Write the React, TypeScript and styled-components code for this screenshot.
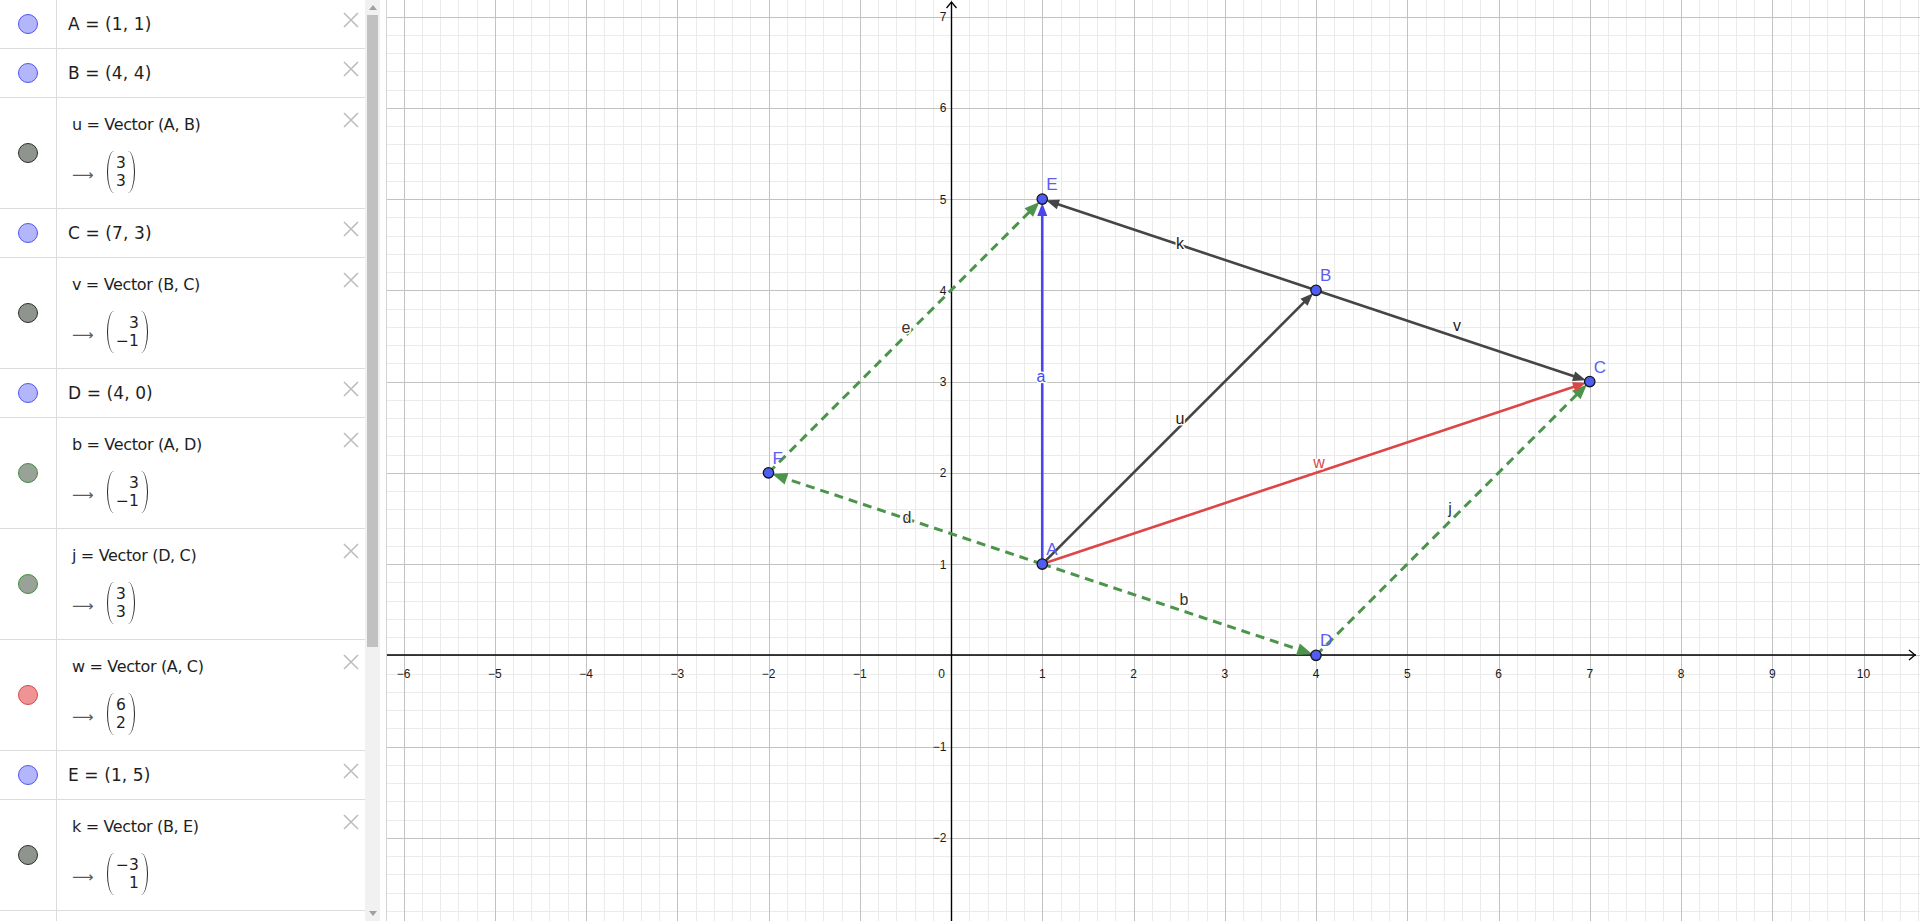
import styled, { createGlobalStyle } from "styled-components";

const GlobalStyle = createGlobalStyle`
  html, body {
    margin: 0;
    padding: 0;
    height: 100%;
    overflow: hidden;
    background: #fff;
  }
  #root {
    height: 100%;
  }
`;

type Tone = "blue" | "gray" | "green" | "red";

const tones: Record<Tone, { fill: string; stroke: string }> = {
  blue: { fill: "#b4b6fb", stroke: "#4d55f0" },
  gray: { fill: "#8e958e", stroke: "#2e2e2e" },
  green: { fill: "#98a298", stroke: "#3f8d3f" },
  red: { fill: "#ee9494", stroke: "#d84646" },
};

type Item =
  | { kind: "point"; text: string; tone: Tone }
  | { kind: "vector"; name: string; def: string; vals: [string, string]; tone: Tone }
  | { kind: "empty" };

const items: Item[] = [
  { kind: "point", text: "A = (1, 1)", tone: "blue" },
  { kind: "point", text: "B = (4, 4)", tone: "blue" },
  { kind: "vector", name: "u", def: "Vector (A, B)", vals: ["3", "3"], tone: "gray" },
  { kind: "point", text: "C = (7, 3)", tone: "blue" },
  { kind: "vector", name: "v", def: "Vector (B, C)", vals: ["3", "−1"], tone: "gray" },
  { kind: "point", text: "D = (4, 0)", tone: "blue" },
  { kind: "vector", name: "b", def: "Vector (A, D)", vals: ["3", "−1"], tone: "green" },
  { kind: "vector", name: "j", def: "Vector (D, C)", vals: ["3", "3"], tone: "green" },
  { kind: "vector", name: "w", def: "Vector (A, C)", vals: ["6", "2"], tone: "red" },
  { kind: "point", text: "E = (1, 5)", tone: "blue" },
  { kind: "vector", name: "k", def: "Vector (B, E)", vals: ["−3", "1"], tone: "gray" },
  { kind: "empty" },
];

// graph geometry (svg coords, graphics view starts at x=387)
const W = 1533;
const H = 921;
const OX = 564;
const OY = 655.3;
const U = 91.25;

const gx = (x: number) => OX + x * U;
const gy = (y: number) => OY - y * U;

const pts: Record<string, [number, number]> = {
  A: [1, 1],
  B: [4, 4],
  C: [7, 3],
  D: [4, 0],
  E: [1, 5],
  F: [-2, 2],
};

const DARK = "#454545";
const BLUE = "#4747ec";
const RED = "#db4646";
const GREEN = "#4c944c";

type Vec = {
  from: string;
  to: string;
  color: string;
  dashed?: boolean;
  label: string;
  at: [number, number];
  labelColor: string;
};

const vectors: Vec[] = [
  { from: "A", to: "D", color: GREEN, dashed: true, label: "b", at: [797, 600], labelColor: "#333" },
  { from: "D", to: "C", color: GREEN, dashed: true, label: "j", at: [1063, 509], labelColor: "#333" },
  { from: "A", to: "F", color: GREEN, dashed: true, label: "d", at: [520, 518], labelColor: "#333" },
  { from: "F", to: "E", color: GREEN, dashed: true, label: "e", at: [519, 328], labelColor: "#333" },
  { from: "A", to: "C", color: RED, label: "w", at: [932, 463], labelColor: RED },
  { from: "A", to: "E", color: BLUE, label: "a", at: [654, 377], labelColor: BLUE },
  { from: "A", to: "B", color: DARK, label: "u", at: [793, 419], labelColor: "#222" },
  { from: "B", to: "C", color: DARK, label: "v", at: [1070, 326], labelColor: "#222" },
  { from: "B", to: "E", color: DARK, label: "k", at: [793, 244], labelColor: "#222" },
];

const Page = styled.div`
  display: flex;
  width: 100vw;
  height: 100vh;
  overflow: hidden;
  background: #fff;
`;

const Sidebar = styled.aside`
  flex: none;
  width: 386px;
  display: flex;
  border-right: 1px solid #d4d4d4;
  background: #fff;
`;

const List = styled.div`
  width: 365px;
  display: flex;
  flex-direction: column;
  overflow: hidden;
  font-family: "DejaVu Sans", sans-serif;
  color: #1e1e1e;
`;

const Row = styled.div<{ $tall?: boolean }>`
  flex: none;
  display: flex;
  height: ${(p) => (p.$tall ? 110 : 48)}px;
  border-bottom: 1px solid #dcdcdc;
`;

const Marble = styled.div`
  flex: none;
  width: 56px;
  border-right: 1px solid #dcdcdc;
  display: flex;
  align-items: center;
  justify-content: center;
`;

const Dot = styled.span<{ $tone: Tone }>`
  width: 18px;
  height: 18px;
  border-radius: 50%;
  background: ${(p) => tones[p.$tone].fill};
  border: 1px solid ${(p) => tones[p.$tone].stroke};
`;

const PointText = styled.div`
  flex: 1;
  display: flex;
  align-items: center;
  padding-left: 11px;
  font-size: 17px;
  letter-spacing: 0.1px;
  white-space: pre;
`;

const VectorBody = styled.div`
  flex: 1;
  display: flex;
  flex-direction: column;
  padding: 16px 0 0 15px;
`;

const Definition = styled.div`
  font-size: 16px;
  line-height: 22px;
  letter-spacing: -0.35px;
  white-space: pre;
`;

const Output = styled.div`
  display: flex;
  align-items: center;
  margin-top: 15px;
`;

const Arrow = styled.span`
  width: 35px;
  font-size: 15px;
  color: #5a5a5a;
  padding-top: 6px;
`;

const Matrix = styled.span`
  display: flex;
  align-items: center;
  height: 42px;
`;

const Paren = styled.span<{ $right?: boolean }>`
  box-sizing: border-box;
  width: 7px;
  height: 42px;
  border: 0 solid #262626;
  ${(p) =>
    p.$right
      ? "border-right-width: 1.6px; border-radius: 0 100% 100% 0 / 0 50% 50% 0;"
      : "border-left-width: 1.6px; border-radius: 100% 0 0 100% / 50% 0 0 50%;"}
`;

const Column = styled.span`
  display: flex;
  flex-direction: column;
  align-items: flex-end;
  padding: 0 2px;
  font-size: 15.5px;
  line-height: 18px;
`;

const Close = styled.button<{ $tall?: boolean }>`
  flex: none;
  align-self: flex-start;
  width: 16px;
  height: 16px;
  margin: ${(p) => (p.$tall ? 14 : 12)}px 6px 0 0;
  padding: 0;
  border: 0;
  background: none;
  display: flex;
`;

const Scrollbar = styled.div`
  flex: none;
  width: 15px;
  display: flex;
  flex-direction: column;
  align-items: center;
  background: #f1f1f1;
`;

const ScrollArrow = styled.div`
  flex: none;
  height: 15px;
  display: flex;
  align-items: center;
  justify-content: center;
`;

const Thumb = styled.div`
  flex: none;
  width: 11px;
  height: 632px;
  background: #c1c1c1;
`;

const Track = styled.div`
  flex: 1;
`;

const Gap = styled.div`
  flex: none;
  width: 6px;
  background: #fff;
`;

const Graphics = styled.main`
  flex: 1;
  overflow: hidden;
  background: #fff;
`;

const Canvas = styled.svg`
  display: block;
  font-family: "Liberation Sans", Arial, sans-serif;
`;

function CloseIcon() {
  return (
    <svg width="16" height="16" viewBox="0 0 16 16">
      <path d="M1 1 L15 15 M15 1 L1 15" stroke="#bdbdbd" strokeWidth="1.6" fill="none" />
    </svg>
  );
}

function Tri({ up }: { up?: boolean }) {
  return (
    <svg width="8" height="5" viewBox="0 0 8 5">
      <path d={up ? "M0 5 L4 0 L8 5 Z" : "M0 0 L4 5 L8 0 Z"} fill="#a0a0a0" />
    </svg>
  );
}

function ListRow({ item }: { item: Item }) {
  if (item.kind === "empty") {
    return (
      <Row $tall>
        <Marble />
      </Row>
    );
  }
  if (item.kind === "point") {
    return (
      <Row>
        <Marble>
          <Dot $tone={item.tone} />
        </Marble>
        <PointText>{item.text}</PointText>
        <Close aria-label="delete">
          <CloseIcon />
        </Close>
      </Row>
    );
  }
  return (
    <Row $tall>
      <Marble>
        <Dot $tone={item.tone} />
      </Marble>
      <VectorBody>
        <Definition>
          {item.name} = {item.def}
        </Definition>
        <Output>
          <Arrow>⟶</Arrow>
          <Matrix>
            <Paren />
            <Column>
              <span>{item.vals[0]}</span>
              <span>{item.vals[1]}</span>
            </Column>
            <Paren $right />
          </Matrix>
        </Output>
      </VectorBody>
      <Close $tall aria-label="delete">
        <CloseIcon />
      </Close>
    </Row>
  );
}

function Grid() {
  const minor: JSX.Element[] = [];
  const major: JSX.Element[] = [];
  for (let i = -35; i <= 60; i++) {
    const x = Math.round(gx(i / 5)) + 0.5;
    if (x < 0 || x > W) continue;
    const el = <line key={`vx${i}`} x1={x} y1={0} x2={x} y2={H} />;
    (i % 5 === 0 ? major : minor).push(el);
  }
  for (let i = -16; i <= 37; i++) {
    const y = Math.round(gy(i / 5)) + 0.5;
    if (y < 0 || y > H) continue;
    const el = <line key={`hy${i}`} x1={0} y1={y} x2={W} y2={y} />;
    (i % 5 === 0 ? major : minor).push(el);
  }
  return (
    <g shapeRendering="crispEdges">
      <g stroke="#ebebeb" strokeWidth="1">{minor}</g>
      <g stroke="#c2c2c2" strokeWidth="1">{major}</g>
    </g>
  );
}

function Axes() {
  const ax = Math.round(OX) + 0.5;
  const ay = Math.round(OY);
  const xs: number[] = [];
  for (let i = -6; i <= 10; i++) if (i !== 0) xs.push(i);
  const ys = [-2, -1, 1, 2, 3, 4, 5, 6, 7];
  const fmt = (n: number) => (n < 0 ? `−${-n}` : `${n}`);
  return (
    <g>
      <line x1={0} y1={ay} x2={W - 4} y2={ay} stroke="#000" strokeWidth="1.4" />
      <polyline points={`${W - 11},${ay - 5} ${W - 5},${ay} ${W - 11},${ay + 5}`} fill="none" stroke="#000" strokeWidth="1.3" />
      <line x1={ax} y1={H} x2={ax} y2={2} stroke="#000" strokeWidth="1.4" />
      <polyline points={`${ax - 5},${8} ${ax},${2} ${ax + 5},${8}`} fill="none" stroke="#000" strokeWidth="1.3" />
      <g fontSize="12" fill="#1a1a1a">
        {xs.map((i) => (
          <text key={`lx${i}`} x={gx(i)} y={ay + 23} textAnchor="middle">
            {fmt(i)}
          </text>
        ))}
        {ys.map((i) => (
          <text key={`ly${i}`} x={ax - 5} y={gy(i) + 4.5} textAnchor="end">
            {fmt(i)}
          </text>
        ))}
        <text x={ax - 10} y={ay + 23} textAnchor="middle">
          0
        </text>
      </g>
    </g>
  );
}

function VectorShape({ v }: { v: Vec }) {
  const [sx0, sy0] = pts[v.from];
  const [ex0, ey0] = pts[v.to];
  const sx = gx(sx0);
  const sy = gy(sy0);
  const ex = gx(ex0);
  const ey = gy(ey0);
  const len = Math.hypot(ex - sx, ey - sy);
  const dx = (ex - sx) / len;
  const dy = (ey - sy) / len;
  const nx = -dy;
  const ny = dx;
  const head = v.dashed ? 15 : 13;
  const half = v.dashed ? 6 : 5;
  const tipX = ex - dx * 4;
  const tipY = ey - dy * 4;
  const bx = tipX - dx * head;
  const by = tipY - dy * head;
  return (
    <g>
      <line
        x1={sx}
        y1={sy}
        x2={bx + dx * 2}
        y2={by + dy * 2}
        stroke={v.color}
        strokeWidth={v.dashed ? 3 : 2.6}
        strokeDasharray={v.dashed ? "9 6" : undefined}
      />
      <polygon
        points={`${tipX},${tipY} ${bx + nx * half},${by + ny * half} ${bx - nx * half},${by - ny * half}`}
        fill={v.color}
      />
    </g>
  );
}

function Graph() {
  return (
    <Canvas width={W} height={H} viewBox={`0 0 ${W} ${H}`}>
      <Grid />
      <Axes />
      {vectors.map((v) => (
        <VectorShape key={v.label} v={v} />
      ))}
      <g fontSize="16" textAnchor="middle" stroke="#fff" strokeWidth="3" paintOrder="stroke" strokeLinejoin="round">
        {vectors.map((v) => (
          <text key={`t${v.label}`} x={v.at[0]} y={v.at[1] + 5} fill={v.labelColor}>
            {v.label}
          </text>
        ))}
      </g>
      {Object.entries(pts).map(([name, [x, y]]) => (
        <circle key={name} cx={gx(x)} cy={gy(y)} r={5.2} fill="#4f5df2" stroke="#151515" strokeWidth="1.3" />
      ))}
      <g fontSize="17" fill="#5c5cf5">
        {Object.entries(pts).map(([name, [x, y]]) => (
          <text key={`p${name}`} x={gx(x) + 4} y={gy(y) - 9}>
            {name}
          </text>
        ))}
      </g>
    </Canvas>
  );
}

export default function App() {
  return (
    <>
      <GlobalStyle />
      <Page>
        <Sidebar>
          <List>
            {items.map((it, i) => (
              <ListRow key={i} item={it} />
            ))}
          </List>
          <Scrollbar>
            <ScrollArrow>
              <Tri up />
            </ScrollArrow>
            <Thumb />
            <Track />
            <ScrollArrow>
              <Tri />
            </ScrollArrow>
          </Scrollbar>
          <Gap />
        </Sidebar>
        <Graphics>
          <Graph />
        </Graphics>
      </Page>
    </>
  );
}
